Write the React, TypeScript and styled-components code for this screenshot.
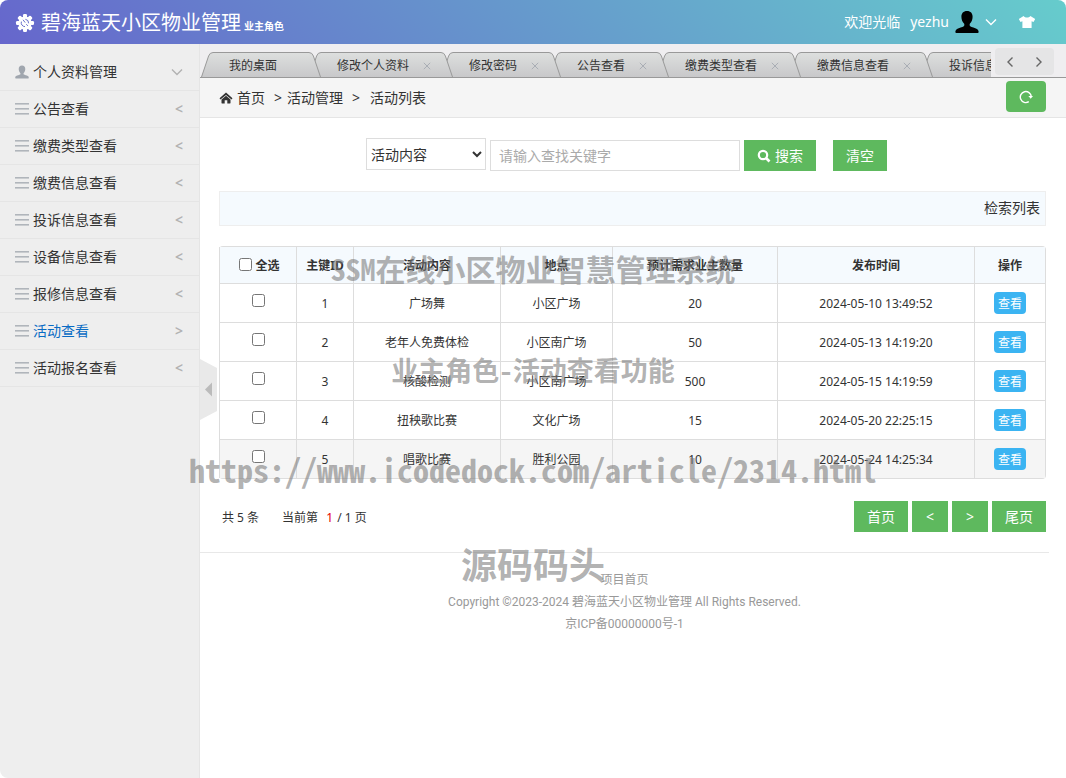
import React from "react";
import styled, { createGlobalStyle, css } from "styled-components";

const SANS = `"Noto Sans", "Noto Sans CJK SC", sans-serif`;

const GlobalStyle = createGlobalStyle`
  * { box-sizing: border-box; }
  body {
    margin: 0;
    background: #fff;
    color: #333;
    font: 14px/20px ${SANS};
  }
  button, input, select { font-family: inherit; color: inherit; }
  a { color: inherit; text-decoration: none; }
`;

const Page = styled.div`
  position: relative;
  display: flex;
  flex-direction: column;
  min-height: 100vh;
  border-radius: 8px;
  overflow: hidden;
`;

/* ---------- header ---------- */

const Header = styled.header`
  display: flex;
  align-items: center;
  height: 44px;
  padding: 0 30px 0 15px;
  color: #fff;
  background: linear-gradient(45deg, #6666cc, #66cccc);
`;

const Brand = styled.a`
  display: flex;
  align-items: center;
  flex: 1;
  gap: 6px;
  padding-top: 2px;
  font-size: 20px;
  line-height: 28px;
  white-space: nowrap;
`;

const Role = styled.small`
  margin-left: -3px;
  padding-top: 6px;
  font-size: 10px;
  font-weight: 700;
`;

const UserArea = styled.nav`
  display: flex;
  align-items: center;
  gap: 10px;
`;

const PlainButton = styled.button`
  display: flex;
  align-items: center;
  padding: 0;
  border: 0;
  background: none;
  color: inherit;
  font-size: 14px;
  line-height: 20px;
`;

const UserButton = styled(PlainButton)`
  gap: 6px;
`;

const SkinButton = styled(PlainButton)`
  margin-left: 11px;
`;

/* ---------- sidebar ---------- */

const Body = styled.div`
  display: flex;
  flex: 1;
`;

const Sidebar = styled.aside`
  position: relative;
  flex: 0 0 200px;
  padding-top: 10px;
  background: #eee;
  border-right: 1px solid #e5e5e5;
`;

const Menu = styled.ul`
  margin: 0;
  padding: 0;
  list-style: none;
`;

const MenuLink = styled.a<{ $active?: boolean }>`
  display: flex;
  align-items: center;
  gap: 4px;
  height: 37px;
  padding: 0 16px 0 15px;
  border-bottom: 1px solid #e5e5e5;
  ${(p) => p.$active && css`color: #0a6cc4;`}
`;

const MenuText = styled.span`
  flex: 1;
`;

const MenuArrow = styled.span`
  display: flex;
  color: #b2b2b2;
  font-weight: 600;
`;

const Collapse = styled.button`
  position: absolute;
  top: calc(50% - 52px);
  left: 200px;
  width: 17px;
  height: 61px;
  padding: 0;
  border: 0;
  background: none;
`;

/* ---------- tabs ---------- */

const Main = styled.main`
  flex: 1;
  min-width: 0;
`;

const TabBar = styled.div`
  display: flex;
  height: 34px;
  padding-top: 8px;
  background: #efeef0;
  border-bottom: 1px solid #999;
`;

const TabStrip = styled.div`
  display: flex;
  flex: 1;
  min-width: 0;
  overflow: hidden;
  padding-left: 1px;
`;

const Tab = styled.div<{ $order: number }>`
  position: relative;
  z-index: ${(p) => p.$order};
  display: flex;
  flex: none;
  height: 25px;
  margin-right: -12px;
`;

const TabBody = styled.div`
  display: flex;
  align-items: center;
  padding: 2px 10px 0 16px;
  border-top: 1px solid #999;
  background: linear-gradient(#dddfde, #c8c8ca);
  font-size: 12px;
  white-space: nowrap;
`;

const TabClose = styled(PlainButton)`
  width: 22px;
  height: 20px;
  justify-content: flex-end;
  color: #a9aeb5;
`;

const TabNav = styled.div`
  display: flex;
  flex: none;
  justify-content: space-around;
  width: 59px;
  height: 27px;
  margin: -4px 12px 0 4px;
  border-radius: 4px;
  background: #e5e5e6;
  color: #666;
`;

/* ---------- breadcrumb ---------- */

const Crumbs = styled.nav`
  display: flex;
  align-items: center;
  height: 40px;
  padding: 0 20px 0 19px;
  background: #f5f5f5;
  border-bottom: 1px solid #e5e5e5;
`;

const CrumbSep = styled.span<{ $width: number }>`
  width: ${(p) => p.$width}px;
  padding-left: 9px;
`;

const CrumbHome = styled.a`
  display: flex;
  align-items: center;
  gap: 4px;
`;

const Refresh = styled.button`
  display: flex;
  align-items: center;
  justify-content: center;
  width: 40px;
  height: 31px;
  margin: 0 0 2px auto;
  border: 0;
  border-radius: 4px;
  background: #5eb95e;
  color: #fff;
`;

/* ---------- content ---------- */

const Content = styled.div`
  padding: 20px 20px 20px 19px;
`;

const SearchForm = styled.form`
  display: flex;
  align-items: flex-end;
  justify-content: center;
  gap: 4px;
  padding-right: 12px;
`;

const FieldSelect = styled.select`
  width: 120px;
  height: 32px;
  margin-bottom: 1px;
  border: 1px solid #ddd;
  background: #fff;
  font-size: 14px;
`;

const Keyword = styled.input`
  width: 250px;
  height: 31px;
  padding: 0 8px;
  border: 1px solid #ddd;
  font-size: 14px;
  &::placeholder { color: #aaa; }
`;

const GreenButton = styled.button`
  display: flex;
  align-items: center;
  justify-content: center;
  gap: 4px;
  min-width: 36px;
  height: 31px;
  padding: 0 13px;
  border: 0;
  background: #5eb95e;
  color: #fff;
  font-size: 14px;
  line-height: 20px;
`;

const ClearButton = styled(GreenButton)`
  margin-left: 13px;
`;

const ListBar = styled.div`
  margin: 20px 0;
  padding: 6px 5px 7px;
  border: 1px solid #eee;
  background: #f5fafe;
  text-align: right;
`;

const Table = styled.table`
  width: 100%;
  table-layout: fixed;
  border: 1px solid #ddd;
  border-left: 0;
  border-spacing: 0;
  border-radius: 4px;
  font-size: 12px;
  text-align: center;
`;

const Th = styled.th`
  padding: 9px 0 7px;
  border-left: 1px solid #ddd;
  background: #f5fafe;
  line-height: 20px;
`;

const Td = styled.td`
  height: 39px;
  padding: 8px 0 6px;
  border-left: 1px solid #ddd;
  border-top: 1px solid #ddd;
  line-height: 24px;
`;

const Tr = styled.tr<{ $hover?: boolean }>`
  background: ${(p) => (p.$hover ? "#f5f5f5" : "#fff")};
`;

const Check = styled.input`
  display: inline-block;
  width: 13px;
  height: 13px;
  margin: 2px 3px;
  vertical-align: top;
`;

const ViewButton = styled.button`
  display: block;
  width: 32px;
  height: 22px;
  margin: 0 auto 2px;
  padding: 1px 0 0;
  border: 0;
  border-radius: 4px;
  background: #3bb4f2;
  color: #fff;
  font-size: 12px;
  line-height: 20px;
`;

const Pager = styled.div`
  display: flex;
  align-items: center;
  gap: 4px;
  padding: 22px 0 0 3px;
`;

const PagerText = styled.p`
  display: flex;
  flex: 1;
  gap: 23px;
  margin: 0;
  padding-top: 2px;
  font-size: 12px;
`;

const Current = styled.span`
  margin: 0 1px 0 5px;
  color: #e60000;
`;

const Footer = styled.footer`
  margin-right: 17px;
  padding: 16px 0;
  border-top: 1px solid #e8e8e8;
  color: #999;
  font-family: Roboto, "Noto Sans CJK SC", sans-serif;
  font-size: 12px;
  line-height: 22px;
  text-align: center;
`;

const FootLine = styled.p`
  margin: 0;
`;

/* ---------- watermark ---------- */

const Watermark = styled.div`
  position: absolute;
  inset: 218px 0 auto;
  z-index: 20;
  display: grid;
  grid-template-rows: 100px 104px 94px 94px;
  align-items: center;
  justify-items: center;
  color: rgba(120, 120, 120, 0.58);
  font-family: "Noto Sans Mono CJK SC", "Noto Sans CJK SC", monospace;
  font-weight: 700;
  white-space: nowrap;
  pointer-events: none;
`;

const Mark = styled.span<{ $size: number }>`
  font-size: ${(p) => p.$size}px;
`;

/* ---------- icons ---------- */

const GearIcon = () => (
  <svg width="20" height="20" viewBox="0 0 20 20">
    <g fill="#fff">
      {[0, 45, 90, 135, 180, 225, 270, 315].map((a) => (
        <rect key={a} x="8" y="1" width="4" height="5" rx="1.2" transform={`rotate(${a} 10 10)`} />
      ))}
      <circle cx="10" cy="10" r="6.6" />
    </g>
    <path d="M6.400 8.600a3.800 3.800 0 0 0 3.600 5M8 6.800l2.200 2.800M12.800 12.900l-1.500-1.700M10.400 6.300a3.800 3.800 0 0 1 3.200 4" fill="none" stroke="#6a70cc" strokeWidth="1" />
  </svg>
);

const UserIcon = ({ size, color }: { size: number; color: string }) => (
  <svg width={size} height={size} viewBox="0 0 24 24" fill={color}>
    <path d="M12 1c3.700 0 5.600 2.300 5.600 5.800 0 2.900-1.100 5.400-2.600 6.800-.5.500-.5 2.200.2 2.700 1.400.9 4.800 1.500 6.800 2.700 1.200.7 1.700 2.100 1.600 3.300 0 .5-.4.700-.9.700H1.300c-.5 0-.9-.2-.9-.7-.1-1.200.4-2.600 1.600-3.300 2-1.200 5.400-1.800 6.800-2.700.7-.5.7-2.200.2-2.700-1.500-1.400-2.600-3.900-2.600-6.800C6.400 3.300 8.300 1 12 1z" />
  </svg>
);

const LinesIcon = () => (
  <svg width="14" height="14" viewBox="0 0 14 14" fill="#b0b5bb">
    <path d="M0 1h14v1H0zM0 6h14v1H0zM0 11h14v1H0z" />
    <path d="M0 2h14v1H0zM0 7h14v1H0zM0 12h14v1H0z" opacity=".6" />
  </svg>
);

const Chevron = ({ dir }: { dir: "down" | "left" | "right" }) => (
  <svg width="12" height="12" viewBox="0 0 12 12" fill="none" stroke="currentColor" strokeWidth="1.400">
    <path d={{ down: "M1 3.500l5 5 5-5", left: "M8.500 1.500L4 6l4.500 4.500", right: "M3.500 1.500L8 6l-4.500 4.500" }[dir]} />
  </svg>
);

const ShirtIcon = () => (
  <svg width="18" height="14" viewBox="0 0 18 14" fill="#fff">
    <path d="M5.600 1c.9 1.200 2 1.600 3.400 1.600S11.500 2.200 12.400 1L17.200 4l-1.700 3-1.900-.8V13H4.400V6.200L2.500 7 .8 4z" />
  </svg>
);

const HomeIcon = () => (
  <svg width="14" height="12" viewBox="0 0 14 12" fill="#333">
    <path d="M7 .6l6.500 5.600-1 1.300L7 2.900 1.500 7.500l-1-1.300z" />
    <path d="M7 3.800l4.500 3.800V11c0 .3-.2.500-.5.500H8.300V8.200H5.700v3.300H3c-.3 0-.5-.2-.5-.5V7.600z" />
  </svg>
);

const RefreshIcon = () => (
  <svg width="14" height="14" viewBox="0 0 14 14" fill="none" stroke="#fff" strokeWidth="1.400">
    <path d="M9.800 11.700A5.500 5.500 0 1 1 12.300 6.600" />
    <path d="M9.400 6h4.600l-2.300 2.800z" fill="#fff" stroke="none" />
  </svg>
);

const SearchIcon = () => (
  <svg width="14" height="14" viewBox="0 0 14 14" fill="none" stroke="#fff">
    <circle cx="6" cy="6" r="4.200" strokeWidth="2.200" />
    <path d="M9 9l3.500 3.500" strokeWidth="2.600" />
  </svg>
);

const CloseIcon = () => (
  <svg width="8" height="8" viewBox="0 0 8 8" stroke="currentColor" fill="none">
    <path d="M.8.8l6.400 6.400M7.200.8L.8 7.200" />
  </svg>
);

const TabCap = ({ side }: { side: "left" | "right" }) => (
  <svg width="12" height="25" viewBox="0 0 12 25" transform={side === "right" ? "scale(-1 1)" : undefined}>
    <defs>
      <linearGradient id={`cap-${side}`} x1="0" y1="0" x2="0" y2="1">
        <stop offset="0" stopColor="#dddfde" />
        <stop offset="1" stopColor="#c8c8ca" />
      </linearGradient>
    </defs>
    <path d="M.5 25L7.600 4Q8.800.5 12 .5V25z" fill={`url(#cap-${side})`} />
    <path d="M.5 25L7.600 4Q8.800.5 12 .5" fill="none" stroke="#999" />
  </svg>
);

/* ---------- data ---------- */

const MENU = ["公告查看", "缴费类型查看", "缴费信息查看", "投诉信息查看", "设备信息查看", "报修信息查看", "活动查看", "活动报名查看"];
const TABS = ["我的桌面", "修改个人资料", "修改密码", "公告查看", "缴费类型查看", "缴费信息查看", "投诉信息查看"];
const COLUMNS = [77, 57, 147, 112, 165, 197, 71];
const HEADS = ["主键ID", "活动内容", "地点", "预计需求业主数量", "发布时间", "操作"];
const ROWS = [
  ["1", "广场舞", "小区广场", "20", "2024-05-10 13:49:52"],
  ["2", "老年人免费体检", "小区南广场", "50", "2024-05-13 14:19:20"],
  ["3", "核酸检测", "小区南广场", "500", "2024-05-15 14:19:59"],
  ["4", "扭秧歌比赛", "文化广场", "15", "2024-05-20 22:25:15"],
  ["5", "唱歌比赛", "胜利公园", "10", "2024-05-24 14:25:34"],
];

export default function App() {
  return (
    <>
      <GlobalStyle />
      <Page>
        <Header>
          <Brand href="#">
            <GearIcon />
            碧海蓝天小区物业管理
            <Role>业主角色</Role>
          </Brand>
          <UserArea>
            <span>欢迎光临</span>
            <UserButton type="button">
              yezhu
              <UserIcon size={24} color="#000" />
              <Chevron dir="down" />
            </UserButton>
            <SkinButton type="button" aria-label="换肤">
              <ShirtIcon />
            </SkinButton>
          </UserArea>
        </Header>

        <Body>
          <Sidebar>
            <Menu>
              <li>
                <MenuLink href="#">
                  <UserIcon size={14} color="#a0a6ae" />
                  <MenuText>个人资料管理</MenuText>
                  <MenuArrow><Chevron dir="down" /></MenuArrow>
                </MenuLink>
              </li>
              {MENU.map((name) => {
                const active = name === "活动查看";
                return (
                  <li key={name}>
                    <MenuLink href="#" $active={active}>
                      <LinesIcon />
                      <MenuText>{name}</MenuText>
                      <MenuArrow>{active ? ">" : "<"}</MenuArrow>
                    </MenuLink>
                  </li>
                );
              })}
            </Menu>
            <Collapse type="button" aria-label="收起菜单">
              <svg width="17" height="61" viewBox="0 0 17 61">
                <path d="M0 0l17 9v43L0 61z" fill="#e9e9e9" />
                <path d="M12 23.500v14L5 30.500z" fill="#bbb" />
              </svg>
            </Collapse>
          </Sidebar>

          <Main>
            <TabBar>
              <TabStrip>
                {TABS.map((name, i) => (
                  <Tab key={name} $order={TABS.length - i}>
                    <TabCap side="left" />
                    <TabBody>
                      {name}
                      <TabClose type="button" aria-label={`关闭${name}`}>
                        {i > 0 && <CloseIcon />}
                      </TabClose>
                    </TabBody>
                    <TabCap side="right" />
                  </Tab>
                ))}
              </TabStrip>
              <TabNav>
                <PlainButton type="button" aria-label="向左"><Chevron dir="left" /></PlainButton>
                <PlainButton type="button" aria-label="向右"><Chevron dir="right" /></PlainButton>
              </TabNav>
            </TabBar>

            <Crumbs>
              <CrumbHome href="#"><HomeIcon />首页</CrumbHome>
              <CrumbSep $width={22}>&gt;</CrumbSep>
              <span>活动管理</span>
              <CrumbSep $width={27}>&gt;</CrumbSep>
              <span>活动列表</span>
              <Refresh type="button" aria-label="刷新"><RefreshIcon /></Refresh>
            </Crumbs>

            <Content>
              <SearchForm>
                <FieldSelect aria-label="查找字段"><option>活动内容</option></FieldSelect>
                <Keyword type="text" aria-label="关键字" placeholder="请输入查找关键字" />
                <GreenButton type="button"><SearchIcon />搜索</GreenButton>
                <ClearButton type="reset">清空</ClearButton>
              </SearchForm>

              <ListBar>检索列表</ListBar>

              <Table>
                <colgroup>
                  {COLUMNS.map((w, i) => <col key={i} width={w} />)}
                </colgroup>
                <thead>
                  <tr>
                    <Th><label><Check type="checkbox" />全选</label></Th>
                    {HEADS.map((h) => <Th key={h}>{h}</Th>)}
                  </tr>
                </thead>
                <tbody>
                  {ROWS.map((row) => (
                    <Tr key={row[0]} $hover={row[0] === "5"}>
                      <Td><Check type="checkbox" aria-label={`选择${row[1]}`} /></Td>
                      {row.map((cell, i) => <Td key={i}>{cell}</Td>)}
                      <Td><ViewButton type="button">查看</ViewButton></Td>
                    </Tr>
                  ))}
                </tbody>
              </Table>

              <Pager>
                <PagerText>
                  <span>共 5 条</span>
                  <span>当前第 <Current>1</Current> / 1 页</span>
                </PagerText>
                <GreenButton type="button">首页</GreenButton>
                <GreenButton type="button">&lt;</GreenButton>
                <GreenButton type="button">&gt;</GreenButton>
                <GreenButton type="button">尾页</GreenButton>
              </Pager>
            </Content>

            <Footer>
              <FootLine><a href="#">项目首页</a></FootLine>
              <FootLine>Copyright ©2023-2024 碧海蓝天小区物业管理 All Rights Reserved.</FootLine>
              <FootLine>京ICP备00000000号-1</FootLine>
            </Footer>
          </Main>
        </Body>

        <Watermark>
          <Mark $size={30}>SSM在线小区物业智慧管理系统</Mark>
          <Mark $size={27}>业主角色-活动查看功能</Mark>
          <Mark $size={32}>https://www.icodedock.com/article/2314.html</Mark>
          <Mark $size={36}>源码码头</Mark>
        </Watermark>
      </Page>
    </>
  );
}
